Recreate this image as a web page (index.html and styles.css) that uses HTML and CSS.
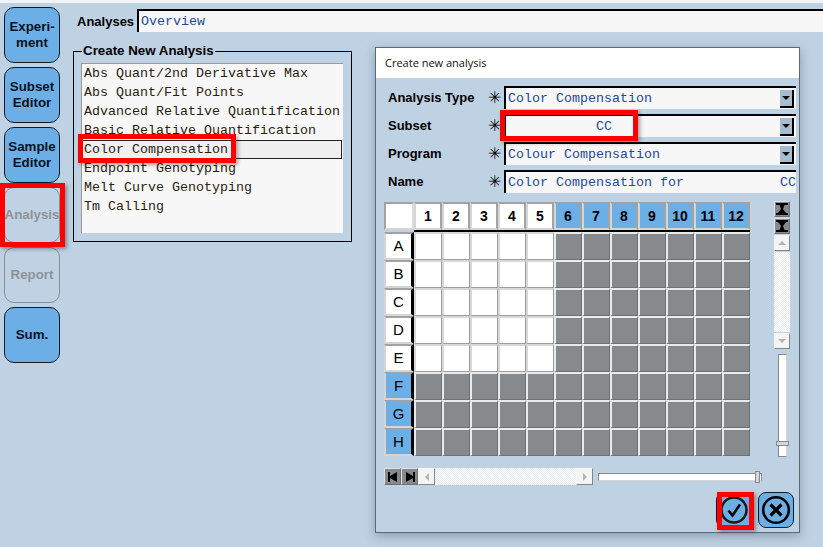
FILE: index.html
```html
<!DOCTYPE html>
<html lang="en">
<head>
<meta charset="utf-8">
<title>Create new analysis</title>
<link rel="stylesheet" href="styles.css">
</head>
<body>
<div class="app">
  <nav class="side">
    <div class="nav">Experi-<br>ment</div>
    <div class="nav">Subset<br>Editor</div>
    <div class="nav">Sample<br>Editor</div>
    <div class="nav off">Analysis</div>
    <div class="nav off">Report</div>
    <div class="nav">Sum.</div>
  </nav>
  <main class="main">
    <div class="top">
      <span class="top-label">Analyses</span>
      <div class="field top-field">Overview</div>
    </div>
    <fieldset class="group">
      <legend>Create New Analysis</legend>
      <ul class="list">
        <li>Abs Quant/2nd Derivative Max</li>
        <li>Abs Quant/Fit Points</li>
        <li>Advanced Relative Quantification</li>
        <li>Basic Relative Quantification</li>
        <li class="sel">Color Compensation</li>
        <li>Endpoint Genotyping</li>
        <li>Melt Curve Genotyping</li>
        <li>Tm Calling</li>
      </ul>
    </fieldset>
  </main>
</div>

<section class="dialog">
  <header class="dlg-title">Create new analysis</header>
  <div class="dlg-body">
    <div class="form">
      <label>Analysis Type</label><span class="star">✳</span>
      <div class="field combo"><span>Color Compensation</span><i class="drop"></i></div>
      <label>Subset</label><span class="star">✳</span>
      <div class="field combo"><span class="cc">CC</span><i class="drop"></i></div>
      <label>Program</label><span class="star">✳</span>
      <div class="field combo"><span>Colour Compensation</span><i class="drop"></i></div>
      <label>Name</label><span class="star">✳</span>
      <div class="field name"><span>Color Compensation for</span><span class="clip">CC</span></div>
    </div>

    <div class="plate-area">
      <div class="plate">
        <div class="h corner"></div>
        <div class="h">1</div><div class="h">2</div><div class="h">3</div><div class="h">4</div><div class="h">5</div>
        <div class="h b">6</div><div class="h b">7</div><div class="h b">8</div><div class="h b">9</div><div class="h b">10</div><div class="h b">11</div><div class="h b">12</div>

        <div class="r">A</div><div class="c w"></div><div class="c w"></div><div class="c w"></div><div class="c w"></div><div class="c w"></div><div class="c"></div><div class="c"></div><div class="c"></div><div class="c"></div><div class="c"></div><div class="c"></div><div class="c"></div>
        <div class="r">B</div><div class="c w"></div><div class="c w"></div><div class="c w"></div><div class="c w"></div><div class="c w"></div><div class="c"></div><div class="c"></div><div class="c"></div><div class="c"></div><div class="c"></div><div class="c"></div><div class="c"></div>
        <div class="r">C</div><div class="c w"></div><div class="c w"></div><div class="c w"></div><div class="c w"></div><div class="c w"></div><div class="c"></div><div class="c"></div><div class="c"></div><div class="c"></div><div class="c"></div><div class="c"></div><div class="c"></div>
        <div class="r">D</div><div class="c w"></div><div class="c w"></div><div class="c w"></div><div class="c w"></div><div class="c w"></div><div class="c"></div><div class="c"></div><div class="c"></div><div class="c"></div><div class="c"></div><div class="c"></div><div class="c"></div>
        <div class="r">E</div><div class="c w"></div><div class="c w"></div><div class="c w"></div><div class="c w"></div><div class="c w"></div><div class="c"></div><div class="c"></div><div class="c"></div><div class="c"></div><div class="c"></div><div class="c"></div><div class="c"></div>
        <div class="r b">F</div><div class="c"></div><div class="c"></div><div class="c"></div><div class="c"></div><div class="c"></div><div class="c"></div><div class="c"></div><div class="c"></div><div class="c"></div><div class="c"></div><div class="c"></div><div class="c"></div>
        <div class="r b">G</div><div class="c"></div><div class="c"></div><div class="c"></div><div class="c"></div><div class="c"></div><div class="c"></div><div class="c"></div><div class="c"></div><div class="c"></div><div class="c"></div><div class="c"></div><div class="c"></div>
        <div class="r b">H</div><div class="c"></div><div class="c"></div><div class="c"></div><div class="c"></div><div class="c"></div><div class="c"></div><div class="c"></div><div class="c"></div><div class="c"></div><div class="c"></div><div class="c"></div><div class="c"></div>
      </div>

      <div class="vbar">
        <div class="sb dark"><svg width="14" height="14" viewBox="0 0 14 14"><path d="M1 1h12v2H9.500L8 7l3 4h2v2H1v-2h2l3-4-1.500-4H1z" fill="#000"/></svg></div>
        <div class="sb dark"><svg width="14" height="14" viewBox="0 0 14 14"><path d="M1 1h12v2h-2L8 7l1.500 4H13v2H1v-2h3.500L6 7 3 3H1z" fill="#000"/></svg></div>
        <div class="sb"><i class="tri up"></i></div>
        <div class="vtrack"></div>
        <div class="sb"><i class="tri down"></i></div>
        <div class="vslider"><i class="vthumb"></i></div>
      </div>
    </div>

    <div class="hbar">
      <div class="sb dark"><svg width="12" height="12" viewBox="0 0 12 12"><path d="M1 1h2v4l7-4v10L3 7v4H1z" fill="#000"/></svg></div>
      <div class="sb dark"><svg width="12" height="12" viewBox="0 0 12 12"><path d="M11 1H9v4L2 1v10l7-4v4h2z" fill="#000"/></svg></div>
      <div class="sb"><i class="tri left"></i></div>
      <div class="htrack"></div>
      <div class="sb"><i class="tri right"></i></div>
      <div class="hslider"><i class="hthumb"></i></div>
    </div>

    <div class="actions">
      <button class="act" aria-label="OK"><svg width="30" height="30" viewBox="0 0 30 30"><circle cx="15" cy="15" r="12.500" fill="none" stroke="#1a1a1a" stroke-width="2.500"/><path d="M9.500 15.500l4 5 7.500-11" fill="none" stroke="#000" stroke-width="2.600"/></svg></button>
      <button class="act" aria-label="Cancel"><svg width="30" height="30" viewBox="0 0 30 30"><circle cx="15" cy="15" r="12.800" fill="none" stroke="#000" stroke-width="2.600"/><path d="M9.500 9.500l11 11M20.500 9.500l-11 11" fill="none" stroke="#000" stroke-width="3.200"/></svg></button>
    </div>
  </div>
</section>

<div class="mark mark-analysis"></div>
<div class="mark mark-list"></div>
<div class="mark mark-subset"></div>
<div class="mark mark-ok"></div>
</body>
</html>
```
FILE: styles.css
```css
* { box-sizing: border-box; }
html, body { margin: 0; height: 100%; }
body {
  width: 823px;
  height: 547px;
  overflow: hidden;
  position: relative;
  background: #bfd2e4;
  border-top: 3px solid #f1f3f5;
  font-family: "Liberation Sans", Arial, sans-serif;
  color: #000;
}
.app { display: flex; padding-left: 4px; }

/* sidebar */
.side { display: flex; flex-direction: column; gap: 4px; width: 56px; padding-top: 4px; }
.nav {
  height: 56px;
  display: flex;
  align-items: center;
  justify-content: center;
  text-align: center;
  border: 1px solid #0a1a2a;
  border-radius: 10px;
  background: #6cafe6;
  font-size: 13.33px;
  font-weight: 700;
  line-height: 16px;
  color: #06121e;
}
.nav.off { background: transparent; border-color: #8a8e92; color: #8e9296; }

/* main */
.main { margin-left: 17px; width: 746px; }
.top { display: flex; align-items: flex-start; padding-top: 6px; height: 41px; }
.top-label { font-size: 13px; font-weight: 700; line-height: 25px; width: 60px; }
.field {
  background: #f7f7f7;
  border-top: 2px solid #000;
  border-left: 2px solid #000;
  font-family: "Liberation Mono", "Courier New", monospace;
  font-size: 13.33px;
  color: #1e4a94;
}
.top-field { width: 686px; height: 23px; padding: 2px 0 0 2px; line-height: 18px; }
.group {
  width: 279px;
  height: 198px;
  margin: 0 0 0 -4px;
  padding: 0 7px;
  border: 1.500px solid #000;
  position: relative;
}
.group legend {
  font-size: 13.33px;
  font-weight: 700;
  line-height: 14px;
  padding: 0 1px;
  margin-left: 1px;
}
.list {
  list-style: none;
  margin: 5px 0 0;
  padding: 0;
  height: 170px;
  width: 262px;
  background: #f7f7f7;
  border-top: 1px solid #9a9a9a;
  border-left: 1px solid #9a9a9a;
  font-family: "Liberation Mono", "Courier New", monospace;
  font-size: 13.33px;
  color: #2b1d10;
}
.list li { height: 19px; line-height: 19px; padding-left: 2px; white-space: nowrap; }
.list .sel { background: #f0f0f0; border: 1px solid #222; line-height: 17px; padding-left: 1px; width: 260px; }

/* dialog window */
.dialog {
  position: absolute;
  left: 375px;
  top: 44px;
  width: 425px;
  height: 486px;
  background: #bfd2e4;
  border: 1px solid #5d6870;
  box-shadow: 0 3px 10px rgba(40, 60, 80, .35);
}
.dlg-title {
  height: 30px;
  background: #fff;
  font-family: "Open Sans", "Noto Sans", sans-serif;
  font-size: 11px;
  line-height: 29px;
  padding-left: 9px;
  color: #111;
}
.dlg-body { padding: 8px 3px 0 8px; }

.form {
  display: grid;
  grid-template-columns: 105px 15px 292px;
  grid-auto-rows: 23px;
  row-gap: 5px;
  align-items: stretch;
}
.form label { font-size: 13px; font-weight: 700; line-height: 24px; padding-left: 4px; }
.star { font-size: 16px; line-height: 23px; color: #000; font-family: "DejaVu Sans", sans-serif; text-align: left; margin-left: -1px; }
.combo, .name { display: flex; align-items: center; justify-content: space-between; padding-left: 2px; white-space: nowrap; }
.combo { padding-right: 2px; }
.cc { margin-left: 88px; }
.clip { width: 16px; }
.drop {
  width: 14px;
  height: 18px;
  background: #a6bdd1;
  border-right: 2px solid #000;
  border-bottom: 2px solid #000;
  display: flex;
  align-items: center;
  justify-content: center;
}
.drop::before {
  content: "";
  border-left: 4px solid transparent;
  border-right: 4px solid transparent;
  border-top: 4px solid #000;
}

/* plate */
.plate-area { display: flex; margin-top: 9px; }
.plate {
  display: grid;
  grid-template-columns: 30px repeat(12, 28px);
  grid-template-rows: 30px repeat(8, 28px);
  width: 366px;
  font-size: 14px;
}
.h, .r {
  display: flex;
  align-items: center;
  justify-content: center;
  background: #fff;
  border: 2px solid;
  border-color: #a2a2a2 #a2a2a2 #d5d5d5 #d5d5d5;
  font-weight: 700;
}
.h { height: 28px; }
.corner { border-color: #a2a2a2 #dcdcdc #d5d5d5 #a2a2a2; }
.r { font-weight: 400; font-size: 15px; border-right-width: 3px; border-color: #a2a2a2 #000 #d5d5d5 #d5d5d5; padding-bottom: 2px; }
.h.b, .r.b { background: #6cafe6; }
.c {
  background: #878a8d;
  border-top: 2px solid #e7ebee;
  border-left: 2px solid #e7ebee;
  border-right: 1px solid #6e7174;
  border-bottom: 1px solid #6e7174;
}
.c.w { background: #fff; border-color: #d8d8d8 #9e9e9e #9e9e9e #d8d8d8; }
.plate > :nth-child(n+15):nth-child(-n+26) { box-shadow: 0 -2px 0 #000; }

/* scrollbars */
.sb {
  width: 16px;
  height: 16px;
  flex: none;
  display: flex;
  align-items: center;
  justify-content: center;
  background: #f4f4f4;
  border: 1px solid;
  border-color: #f6f6f6 #868686 #868686 #f6f6f6;
}
.sb.dark { background: #878a8d; border-color: #dfe3e6 #6e7174 #6e7174 #dfe3e6; }
.tri { width: 0; height: 0; border: 4px solid transparent; }
.tri.up { border-bottom-color: #b4b4b4; border-top-width: 0; }
.tri.down { border-top-color: #b4b4b4; border-bottom-width: 0; }
.tri.left { border-right-color: #b4b4b4; border-left-width: 0; }
.tri.right { border-left-color: #b4b4b4; border-right-width: 0; }

.vbar { display: flex; flex-direction: column; margin-left: 24px; width: 16px; gap: 1px; height: 256px; margin-top: -1px; }
.vtrack { width: 16px; height: 80px; background: repeating-conic-gradient(#e9ecef 0 25%, #fff 0 50%) 0 0 / 2px 2px; }
.vslider {
  width: 9px;
  height: 103px;
  margin: 4px 0 0 4px;
  background: #fff;
  border: 1px solid #8a8a8a;
  border-right-color: #d5d5d5;
  position: relative;
}
.vthumb { position: absolute; left: -3px; top: 86px; width: 13px; height: 5px; background: #d6d6d6; border: 1px solid #8a8a8a; }

.hbar { display: flex; align-items: center; margin-top: 11px; height: 17px; }
.hbar .sb { height: 17px; width: 17px; }
.htrack { width: 141px; height: 17px; background: repeating-conic-gradient(#e9ecef 0 25%, #fff 0 50%) 0 0 / 2px 2px; }
.hslider {
  width: 164px;
  height: 8px;
  margin-left: 5px;
  background: #fff;
  border: 1px solid #8a8a8a;
  border-bottom-color: #d5d5d5;
  position: relative;
}
.hthumb { position: absolute; left: 156px; top: -3px; width: 5px; height: 12px; background: #d6d6d6; border: 1px solid #8a8a8a; }

.actions { display: flex; justify-content: flex-end; gap: 6px; margin-top: 7px; padding-right: 2px; }
.act {
  width: 36px;
  height: 36px;
  padding: 0;
  display: flex;
  align-items: center;
  justify-content: center;
  background: #6cafe6;
  border: 1px solid #0a1a2a;
  border-radius: 8px;
}

/* annotation rectangles drawn over the screenshot */
.mark {
  position: absolute;
  border: 5px solid #f00;
  box-shadow: 2px 2px 4px rgba(0, 0, 0, .35);
}
.mark-analysis { left: 0; top: 180px; width: 65px; height: 64px; }
.mark-list { left: 78px; top: 131px; width: 158px; height: 29px; }
.mark-subset { left: 500px; top: 107px; width: 138px; height: 31px; }
.mark-ok { left: 717px; top: 489px; width: 37px; height: 38px; }
```
